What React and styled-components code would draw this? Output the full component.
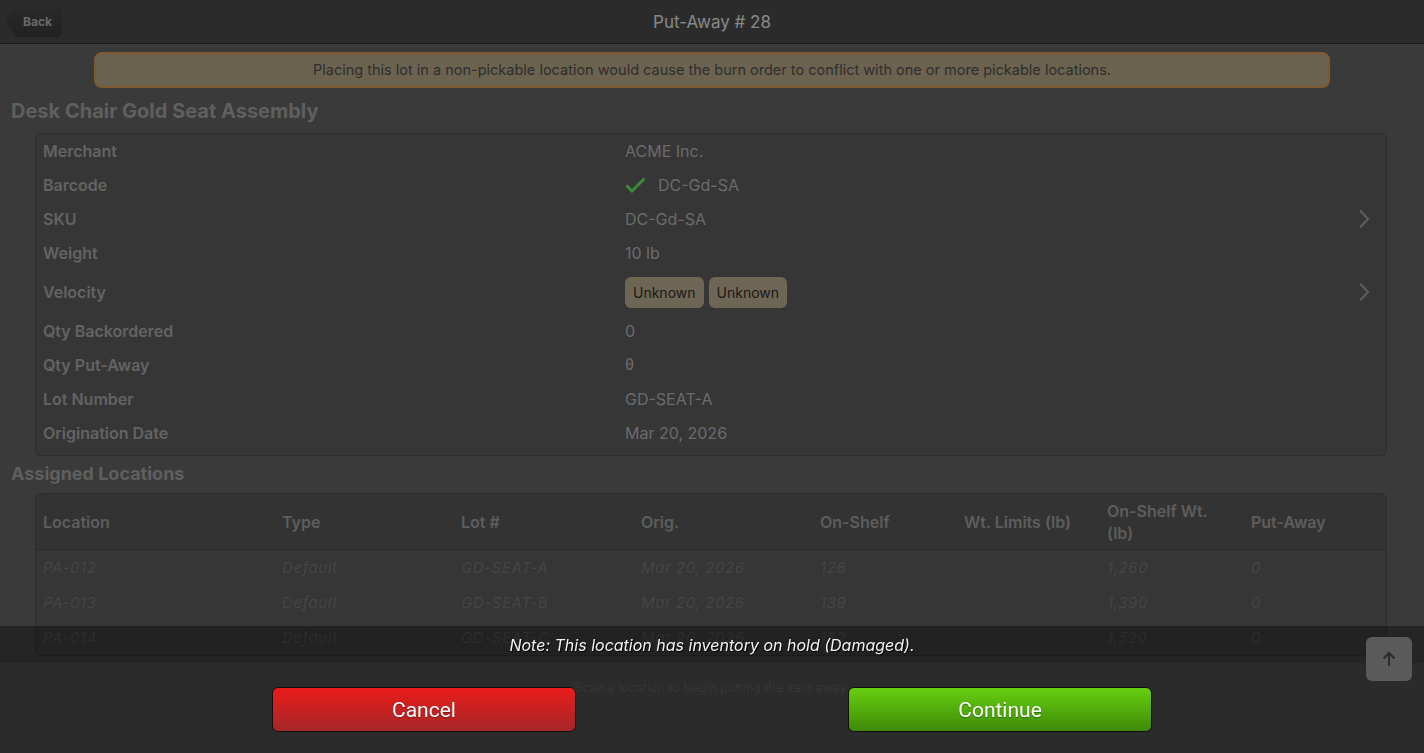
import React from 'react';
import styled, { createGlobalStyle } from 'styled-components';

const GlobalStyle = createGlobalStyle`
  html, body {
    margin: 0;
    padding: 0;
    height: 100%;
    overflow: hidden;
    background: #616161;
    font-family: Inter, Roboto, 'Liberation Sans', sans-serif;
  }
  * {
    box-sizing: border-box;
  }
`;

const Page = styled.div`
  position: fixed;
  inset: 0;
  display: flex;
  flex-direction: column;
  background: #616161;
`;

const TopBar = styled.header`
  height: 44px;
  flex: 0 0 44px;
  display: flex;
  align-items: center;
  justify-content: center;
  position: relative;
  background: #494949;
  border-bottom: 1px solid #2f2f2f;
`;

const BackButton = styled.button`
  position: absolute;
  left: 5px;
  top: 5px;
  width: 57px;
  height: 32px;
  border: none;
  padding: 0 0 0 8px;
  background: linear-gradient(#474747, #383838);
  color: #b0b0b0;
  font: 700 12px Inter, sans-serif;
  border-radius: 0 5px 5px 0;
  clip-path: polygon(12px 0, 100% 0, 100% 100%, 12px 100%, 0 50%);
`;

const PageTitle = styled.h1`
  margin: 0;
  font-size: 17px;
  font-weight: 400;
  color: #e0e0e0;
`;

const Content = styled.main`
  flex: 1;
  overflow: hidden;
`;

const Banner = styled.div`
  margin: 8px auto 0;
  width: 1236px;
  height: 36px;
  padding-bottom: 2px;
  display: flex;
  align-items: center;
  justify-content: center;
  background: #b2a585;
  border: 2px solid #d09650;
  border-radius: 8px;
  color: #4e4e4e;
  font-size: 14.5px;
`;

const SectionTitle = styled.h2`
  margin: ${(p) => p.$margin};
  padding-left: 11px;
  font-size: ${(p) => p.$size}px;
  line-height: ${(p) => p.$size + 4}px;
  font-weight: 700;
  color: #9e9e9e;
`;

const Card = styled.section`
  margin: 0 37px 0 35px;
  background: #5a5a5a;
  border: 1px solid #4b4b4b;
  border-radius: 6px;
  padding: ${(p) => p.$padding || '0'};
  overflow: hidden;
`;

const InfoRow = styled.div`
  display: grid;
  grid-template-columns: 582px 1fr 20px;
  align-items: center;
  height: ${(p) => (p.$tall ? 44 : 34)}px;
  padding: 0 16px 0 7px;

  svg:last-child {
    justify-self: end;
  }
`;

const Label = styled.span`
  font-size: 16px;
  font-weight: 600;
  color: #a6a6a6;
`;

const Value = styled.span`
  display: flex;
  align-items: center;
  gap: 12px;
  color: #b2b2b2;
  font-family: ${(p) => (p.$mono ? "'DejaVu Sans Mono', monospace" : 'inherit')};
  font-size: ${(p) => (p.$mono ? 15 : 16)}px;
`;

const Badges = styled.div`
  display: flex;
  gap: 5px;
`;

const Badge = styled.span`
  height: 31px;
  padding: 0 8px;
  display: inline-flex;
  align-items: center;
  background: #b6aa8c;
  border-radius: 6px;
  color: #2e2e2e;
  font-size: 14px;
`;

const Chevron = () => (
  <svg width="12" height="20" viewBox="0 0 12 20">
    <polyline points="2,1.5 10,10 2,18.5" fill="none" stroke="#999" strokeWidth="2.2" />
  </svg>
);

const Check = () => (
  <svg width="21" height="16" viewBox="0 0 21 16">
    <polyline points="1.5,8.5 7,14 19.5,1.5" fill="none" stroke="#62e662" strokeWidth="3" />
  </svg>
);

const TableGrid = styled.div`
  display: grid;
  grid-template-columns: 239px 179px 180px 179px 144px 143px 144px 1fr;
  padding: 0 7px;
  align-items: center;
  height: ${(p) => (p.$head ? 56 : 35)}px;
  background: ${(p) => (p.$head ? '#555555' : 'transparent')};
  border-bottom: ${(p) => (p.$head ? '1px solid #484848' : 'none')};
`;

const HeadCell = styled.span`
  max-width: 124px;
  font-size: 16px;
  line-height: 22px;
  font-weight: 600;
  color: #9c9c9c;
`;

const Cell = styled.span`
  font-size: 15px;
  font-style: italic;
  letter-spacing: 0.6px;
  color: #737373;
`;

const Footer = styled.footer`
  flex: 0 0 90px;
  background: #484848;
  padding-top: 17px;
  text-align: center;
  font-size: 12.5px;
  color: #5a5a5a;
`;

const Overlay = styled.div`
  position: fixed;
  inset: 0;
  background: rgba(0, 0, 0, 0.4);
`;

const Modal = styled.div`
  position: fixed;
  left: 0;
  right: 0;
  bottom: 0;
`;

const NoteBar = styled.div`
  height: 37px;
  display: flex;
  align-items: center;
  justify-content: center;
  background: rgba(0, 0, 0, 0.36);
  color: #f2f2f2;
  font-size: 16px;
  font-style: italic;
  text-shadow: 1px 1px 1px #000;
`;

const ButtonRow = styled.div`
  height: 90px;
  display: flex;
  justify-content: center;
  gap: 272px;
  padding-top: 24px;
`;

const ActionButton = styled.button`
  width: 304px;
  height: 45px;
  border: 1px solid #111;
  border-radius: 6px;
  color: #fff;
  font: 400 21px Roboto, sans-serif;
  text-shadow: 0 1px 1px rgba(0, 0, 0, 0.35);
  background: ${(p) =>
    p.$tone === 'danger'
      ? 'linear-gradient(#ea1b1b, #a52727)'
      : 'linear-gradient(#67cf10, #3e8a08)'};
`;

const ScrollTop = styled.button`
  position: fixed;
  right: 12px;
  bottom: 72px;
  width: 46px;
  height: 44px;
  border: none;
  border-radius: 6px;
  background: #5a5a5a;
  display: flex;
  align-items: center;
  justify-content: center;
`;

const details = [
  { label: 'Merchant', value: 'ACME Inc.' },
  { label: 'Barcode', value: 'DC-Gd-SA', check: true },
  { label: 'SKU', value: 'DC-Gd-SA', link: true },
  { label: 'Weight', value: '10 lb' },
  { label: 'Velocity', badges: ['Unknown', 'Unknown'], link: true },
  { label: 'Qty Backordered', value: '0' },
  { label: 'Qty Put-Away', value: '0', mono: true },
  { label: 'Lot Number', value: 'GD-SEAT-A' },
  { label: 'Origination Date', value: 'Mar 20, 2026' },
];

const columns = ['Location', 'Type', 'Lot #', 'Orig.', 'On-Shelf', 'Wt. Limits (lb)', 'On-Shelf Wt. (lb)', 'Put-Away'];

const locations = [
  ['PA-012', 'Default', 'GD-SEAT-A', 'Mar 20, 2026', '126', '', '1,260', '0'],
  ['PA-013', 'Default', 'GD-SEAT-B', 'Mar 20, 2026', '139', '', '1,390', '0'],
  ['PA-014', 'Default', 'GD-SEAT-C', 'Mar 20, 2026', '152', '', '1,520', '0'],
];

export default function App() {
  return (
    <>
      <GlobalStyle />
      <Page>
        <TopBar>
          <BackButton>Back</BackButton>
          <PageTitle>Put-Away # 28</PageTitle>
        </TopBar>
        <Content>
          <Banner>
            Placing this lot in a non-pickable location would cause the burn order to conflict with one or more pickable locations.
          </Banner>
          <SectionTitle $size={20} $margin="11px 0 10px">Desk Chair Gold Seat Assembly</SectionTitle>
          <Card $padding="0 0 5px">
            {details.map((d) => (
              <InfoRow key={d.label} $tall={!!d.badges}>
                <Label>{d.label}</Label>
                {d.badges ? (
                  <Badges>
                    {d.badges.map((b, i) => (
                      <Badge key={i}>{b}</Badge>
                    ))}
                  </Badges>
                ) : (
                  <Value $mono={d.mono}>
                    {d.check && <Check />}
                    {d.value}
                  </Value>
                )}
                {d.link ? <Chevron /> : <span />}
              </InfoRow>
            ))}
          </Card>
          <SectionTitle $size={18} $margin="7px 0 8px">Assigned Locations</SectionTitle>
          <Card>
            <TableGrid $head>
              {columns.map((c) => (
                <HeadCell key={c}>{c}</HeadCell>
              ))}
            </TableGrid>
            {locations.map((row) => (
              <TableGrid key={row[0]}>
                {row.map((v, i) => (
                  <Cell key={i}>{v}</Cell>
                ))}
              </TableGrid>
            ))}
          </Card>
        </Content>
        <Footer>Scan a location to begin putting the item away.</Footer>
      </Page>
      <Overlay />
      <Modal>
        <NoteBar>Note: This location has inventory on hold (Damaged).</NoteBar>
        <ButtonRow>
          <ActionButton $tone="danger">Cancel</ActionButton>
          <ActionButton $tone="go">Continue</ActionButton>
        </ButtonRow>
      </Modal>
      <ScrollTop>
        <svg width="14" height="16" viewBox="0 0 14 16">
          <path d="M7 15V2M1.5 7.5L7 2l5.5 5.5" fill="none" stroke="#2b2b2b" strokeWidth="2" />
        </svg>
      </ScrollTop>
    </>
  );
}
